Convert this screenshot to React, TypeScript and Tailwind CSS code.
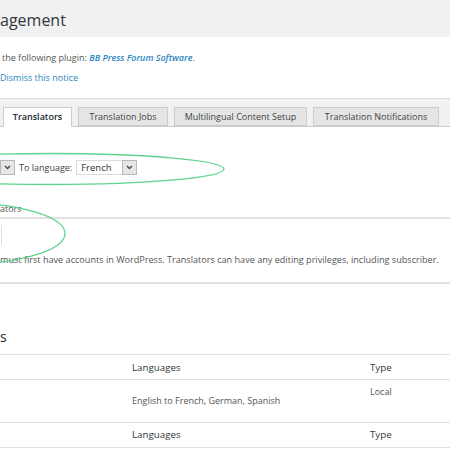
import React from "react";

function Chevron() {
  return (
    <svg width="7" height="5" viewBox="0 0 7 5" className="block">
      <path d="M1 1 L3.5 3.6 L6 1" fill="none" stroke="#4a4a4a" strokeWidth="1.4" />
    </svg>
  );
}

function ArrowBox() {
  return (
    <div className="w-[15px] h-[15px] bg-[#e6e6e6] border border-[#b9b9b9] flex items-center justify-center">
      <Chevron />
    </div>
  );
}

export default function App() {
  const tabs = [
    { label: "Translators", w: "w-[69px]", active: true },
    { label: "Translation Jobs", w: "w-[90px]", active: false },
    { label: "Multilingual Content Setup", w: "w-[133px]", active: false },
    { label: "Translation Notifications", w: "w-[126px]", active: false },
  ];
  return (
    <div className="relative w-[450px] h-[450px] overflow-hidden bg-white text-[#444] font-['Open_Sans',sans-serif]">
      {/* Header */}
      <div className="h-[37px] bg-[#f1f1f1] pt-[9px]">
        <div className="text-[16px] leading-[22px] text-[#32373c]">agement</div>
      </div>

      {/* Notice */}
      <div className="h-[62px] bg-white border-b border-[#dcdcdc] pt-[15px] pl-[2px] text-[9px] leading-[12px]">
        <div className="text-[#555] font-medium">
          the following plugin: <span className="text-[#2a86bd] italic font-semibold">BB Press Forum Software</span>.
        </div>
        <div className="mt-[8px] -ml-[2px] text-[#2a86bd] font-medium">Dismiss this notice</div>
      </div>

      {/* Tabs */}
      <div className="h-[28px] bg-[#f1f1f1] border-b border-[#cccccc] pt-[8px] pl-[3px] flex gap-[6px]">
        {tabs.map((t) => (
          <div
            key={t.label}
            className={
              t.active
                ? `${t.w} h-[20px] bg-white border border-[#cccccc] border-b-white text-center text-[9px] leading-[12px] pt-[3px] text-[#23282d] font-semibold`
                : `${t.w} h-[19px] bg-[#e5e5e5] border border-[#cccccc] text-center text-[9px] leading-[12px] pt-[3px] text-[#444] font-medium`
            }
          >
            {t.label}
          </div>
        ))}
      </div>

      {/* Language selects */}
      <div className="mt-[33px] flex items-center h-[15px]">
        <ArrowBox />
        <div className="ml-[4px] text-[9px] leading-[12px] text-[#444]">To language:</div>
        <div className="ml-[4px] w-[61px] h-[15px] flex border border-[#dddddd] bg-white">
          <div className="flex-1 pl-[4px] text-[9.5px] leading-[13px] text-[#333]">French</div>
          <div className="-my-px -mr-px">
            <ArrowBox />
          </div>
        </div>
      </div>

      {/* Translators block */}
      <div className="mt-[28px] border-b-2 border-[#e2e2e2] pb-[2px]">
        <div className="text-[9px] leading-[12px] text-[#555]">ators</div>
      </div>
      <div className="border-b-2 border-[#e2e2e2] pb-[16px]">
        <div className="mt-[6px] w-[2px] h-[20px] border-r border-[#dddddd]" />
        <div className="mt-[9px] text-[9.1px] leading-[12px] text-[#555] whitespace-nowrap">
          must first have accounts in WordPress. Translators can have any editing privileges, including subscriber.
        </div>
      </div>

      {/* Heading */}
      <div className="mt-[43px] text-[14px] leading-[19px] text-[#23282d]">s</div>

      {/* Table */}
      <div className="mt-[8px] border-t border-[#e1e1e1]">
        <div className="grid grid-cols-[132px_238px_1fr] h-[25px] border-b border-[#e1e1e1] pt-[6px] text-[9.75px] leading-[13px] text-[#32373c]">
          <div />
          <div>Languages</div>
          <div>Type</div>
        </div>
        <div className="grid grid-cols-[132px_238px_1fr] h-[43px] border-b border-[#e1e1e1] text-[9px] leading-[12px] text-[#555]">
          <div />
          <div className="pt-[15px]">English to French, German, Spanish</div>
          <div className="pt-[6px]">Local</div>
        </div>
        <div className="grid grid-cols-[132px_238px_1fr] h-[25px] border-b border-[#e1e1e1] pt-[5px] text-[9.75px] leading-[13px] text-[#32373c]">
          <div />
          <div>Languages</div>
          <div>Type</div>
        </div>
      </div>

      {/* Highlight ellipses */}
      <svg className="absolute left-0 top-0 pointer-events-none" width="450" height="450" viewBox="0 0 450 450">
        <ellipse cx="52" cy="169" rx="172" ry="15.5" fill="none" stroke="#5fd48e" strokeWidth="1.3" />
        <ellipse cx="-41" cy="233.5" rx="106" ry="31" fill="none" stroke="#5fd48e" strokeWidth="1.3" />
      </svg>
    </div>
  );
}
